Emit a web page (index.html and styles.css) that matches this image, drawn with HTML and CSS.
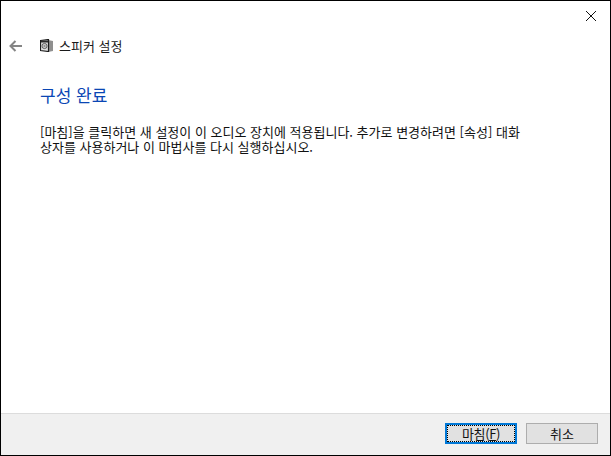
FILE: index.html
```html
<!DOCTYPE html>
<html lang="ko">
<head>
<meta charset="utf-8">
<title>스피커 설정</title>
<link rel="stylesheet" href="styles.css">
</head>
<body>
<div class="window">
  <div class="titlebar">
    <svg class="close" width="10" height="10" viewBox="0 0 10 10"><path d="M0 0L10 10M10 0L0 10" stroke="#111" stroke-width="1" fill="none"/></svg>
  </div>
  <div class="nav">
    <svg class="back" width="14" height="12" viewBox="0 0 14 12"><path d="M13 6H2M6.500 1L1.500 6L6.500 11" stroke="#858585" stroke-width="2" fill="none"/></svg>
    <svg class="speaker" width="13" height="13" viewBox="0 0 13 13">
      <path d="M8 1L13 2V12L8 13Z" fill="#8f8f8f"/>
      <path d="M0.500 1.500L8.500 0.500V12.500L0.500 11.500Z" fill="#e2e2e2" stroke="#1c1c1c" stroke-width="1.200"/>
      <path d="M1 1.500H8V3.500H1Z" fill="#2a2a2a"/>
      <circle cx="4.500" cy="7" r="2.600" fill="#c9c9c9" stroke="#444" stroke-width="0.800"/>
      <circle cx="4.500" cy="7" r="1" fill="#8a8a8a"/>
    </svg>
    <span class="nav-title">스피커 설정</span>
  </div>
  <div class="content">
    <h1 class="heading">구성 완료</h1>
    <p class="message">[마침]을 클릭하면 새 설정이 이 오디오 장치에 적용됩니다. 추가로 변경하려면 [속성] 대화<br>상자를 사용하거나 이 마법사를 다시 실행하십시오.</p>
  </div>
  <div class="footer">
    <button class="btn btn-default"><span class="focus">마침(<u>F</u>)</span></button>
    <button class="btn">취소</button>
  </div>
</div>
</body>
</html>
```
FILE: styles.css
```css
* { box-sizing: border-box; }
html, body { margin: 0; padding: 0; background: #fff; }
body { width: 611px; height: 456px; overflow: hidden; font-family: "Noto Sans CJK KR", "Liberation Sans", sans-serif; }
.window { width: 611px; height: 456px; border: 1px solid #000; display: flex; flex-direction: column; background: #fff; }
.titlebar { height: 30px; display: flex; justify-content: flex-end; align-items: flex-start; padding: 10px 14px 0 0; flex: none; }
.close { display: block; }
.nav { height: 29px; flex: none; display: flex; align-items: center; padding-left: 8px; }
.back { margin-right: 17px; }
.speaker { margin-right: 6px; }
.nav-title { font-size: 13px; color: #1a1a1a; line-height: 16px; }
.content { flex: 1; padding: 0 0 0 39px; }
.heading { margin: 23px 0 0; font-size: 17px; font-weight: 400; color: #0a46b4; line-height: 24px; }
.message { margin: 17px 0 0; font-size: 13px; line-height: 15px; color: #111; white-space: nowrap; }
.footer { height: 42px; flex: none; background: #f0f0f0; border-top: 1px solid #dcdcdc; display: flex; justify-content: flex-end; align-items: flex-start; gap: 9px; padding: 9px 12px 0 0; }
.btn { width: 72px; height: 21px; padding: 0; margin: 0; border: 1px solid #adadad; background: #e1e1e1; font: 13px/15px "Noto Sans CJK KR", "Liberation Sans", sans-serif; color: #111; display: flex; align-items: center; justify-content: center; }
.btn-default { border: 2px solid #0078d7; }
.focus { width: 100%; height: 100%; border: 1px dotted #000; display: flex; align-items: center; justify-content: center; letter-spacing: -0.4px; }
```
